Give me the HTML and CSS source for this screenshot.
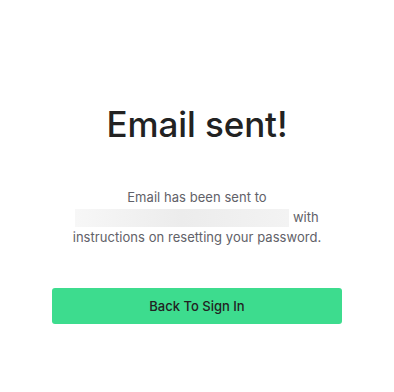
FILE: index.html
```html
<!DOCTYPE html>
<html lang="en">
<head>
<meta charset="utf-8">
<title>Email sent</title>
<link rel="stylesheet" href="styles.css">
</head>
<body>
<main class="page">
  <section class="card">
    <h1 class="title">Email sent!</h1>
    <p class="message">Email has been sent to<br><span class="redacted"></span> with<br>instructions on resetting your password.</p>
    <button class="btn" type="button">Back To Sign In</button>
  </section>
</main>
</body>
</html>
```

FILE: styles.css
```css
html, body {
  margin: 0;
  padding: 0;
  background: #ffffff;
}
body {
  font-family: Inter, "Noto Sans", "Liberation Sans", sans-serif;
}
.page {
  display: flex;
  justify-content: center;
  padding-top: 102px;
}
.card {
  width: 290px;
  display: flex;
  flex-direction: column;
  align-items: center;
}
.title {
  margin: 0;
  font-size: 35px;
  font-weight: 500;
  line-height: 44px;
  color: #222222;
  letter-spacing: -0.1px;
}
.message {
  margin: 41px 0 0;
  font-size: 13px;
  line-height: 20px;
  color: #616168;
  text-align: center;
  letter-spacing: 0.05px;
}
.redacted {
  display: inline-block;
  width: 214px;
  height: 18px;
  vertical-align: -5px;
  background: linear-gradient(90deg, #f7f7f7 0%, #ececec 50%, #f3f3f3 100%);
}
.btn {
  margin-top: 41px;
  width: 290px;
  height: 36px;
  border: none;
  border-radius: 3px;
  background: #3ddc8e;
  color: #222222;
  font-family: inherit;
  font-size: 13px;
  font-weight: 500;
  cursor: pointer;
}
```
